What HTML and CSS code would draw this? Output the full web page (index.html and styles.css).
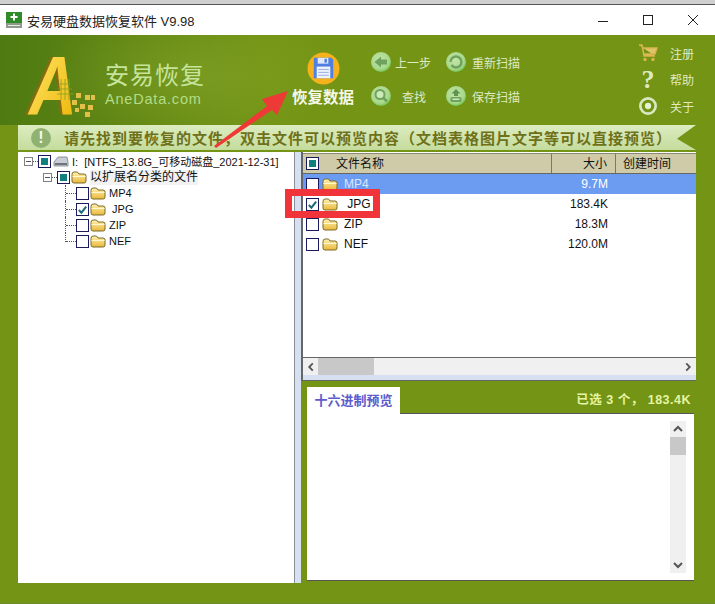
FILE: index.html
```html
<!doctype html>
<html>

<head>
	<meta charset="utf-8" />
	<title>安易硬盘数据恢复软件</title>
	<link rel="stylesheet" href="styles.css">
</head>

<body>

	<svg class="defs" width="0" height="0">
		<defs>
			<linearGradient id="folderFill" x1="0" y1="0" x2="0" y2="1">
				<stop offset="0" stop-color="#fff2b0" />
				<stop offset="1" stop-color="#e8b93c" />
			</linearGradient>
			<linearGradient id="letterFill" x1="0" y1="0" x2="1" y2="1">
				<stop offset="0" stop-color="#ffec70" />
				<stop offset="1" stop-color="#eeb000" />
			</linearGradient>
			<radialGradient id="ballFill" cx="0.45" cy="0.4" r="0.65">
				<stop offset="0" stop-color="#c4e4aa" />
				<stop offset=".7" stop-color="#a8d88c" />
				<stop offset="1" stop-color="#64c046" />
			</radialGradient>
			<symbol id="folder" viewBox="0 0 16 13">
				<path d="M1 3.500 Q1 1 3 1 H6.500 L8 3 H13 Q15 3 15 5 V10 Q15 12 13 12 H3 Q1 12 1 10 Z" fill="url(#folderFill)" stroke="#7d6a2a" />
				<path d="M1.500 5.500 H14.500" stroke="#fff8d0" />
			</symbol>
			<symbol id="check" viewBox="0 0 12 12">
				<path d="M2 6.500 L4.800 9.500 L10 2.800" fill="none" stroke="#1d6a78" stroke-width="2.200" />
			</symbol>
		</defs>
	</svg>

	<div class="topstrip"></div>

	<div class="titlebar">
		<svg class="appicon" viewBox="0 0 16 16">
			<rect width="16" height="11" fill="#2f8a2a" />
			<path d="M8 1.500 V8.500 M4.500 5 H11.500" stroke="#fff" stroke-width="2" />
			<rect y="11" width="16" height="5" fill="#8f9a8a" />
			<rect x="2" y="13" width="12" height="1" fill="#e8e8e8" />
		</svg>
		<span class="apptitle">安易硬盘数据恢复软件 V9.98</span>
		<div class="winctl">
			<svg viewBox="0 0 10 10"><path d="M0 6.500 H10" stroke="#222" /></svg>
			<svg viewBox="0 0 10 10"><rect x=".5" y=".5" width="9" height="9" fill="none" stroke="#222" /></svg>
			<svg viewBox="0 0 10 10"><path d="M0 0 L10 10 M10 0 L0 10" stroke="#222" /></svg>
		</div>
	</div>

	<header class="toolbar">
		<div class="logo">
			<svg class="logomark" viewBox="0 0 76 66">
				<text class="logoletter" transform="translate(5 61) scale(.85 1.08)">A</text>
				<path d="M33 40 H50 M34 35 H48 M36 30 H46 M37 25 V46 M41 25 V46 M45 25 V46" stroke="#8ca020" stroke-width=".8" fill="none" />
				<g fill="#e2bf48">
					<rect x="52" y="39" width="5" height="5" />
					<rect x="61" y="41" width="5" height="5" />
					<rect x="67" y="41" width="4" height="5" />
					<rect x="48" y="46" width="5" height="5" />
					<rect x="56" y="50" width="5" height="5" />
					<rect x="64" y="51" width="5" height="5" />
					<rect x="51" y="54" width="4" height="4" />
					<rect x="61" y="58" width="5" height="5" />
				</g>
			</svg>
			<div class="logotext">
				<div class="logocn">安易恢复</div>
				<div class="logoen">AneData.com</div>
			</div>
		</div>

		<div class="restore">
			<svg class="restoreicon" viewBox="0 0 34 34">
				<circle cx="17" cy="17" r="16.500" fill="#f5b21c" />
				<path d="M7 6 H25 L27 8 V27 H7 Z" fill="#4f7fe0" />
				<rect x="11" y="6" width="11" height="6" fill="#dfe8fa" />
				<rect x="18" y="7" width="2.500" height="4" fill="#4f7fe0" />
				<rect x="10" y="15" width="14" height="12" fill="#eef2fb" />
				<path d="M11.500 18 H22.500 M11.500 21 H22.500 M11.500 24 H22.500" stroke="#9ab0dc" />
			</svg>
			<span class="restorelabel">恢复数据</span>
		</div>

		<div class="actions">
			<div class="action">
				<svg class="ballicon" viewBox="0 0 20 20">
					<circle cx="10" cy="10" r="10" fill="url(#ballFill)" />
					<path d="M3.500 10 L10 4.500 V7.500 H16 V12.500 H10 V15.500 Z" fill="#6fa25c" />
				</svg>
				<span>上一步</span>
			</div>
			<div class="action">
				<svg class="ballicon" viewBox="0 0 20 20">
					<circle cx="10" cy="10" r="10" fill="url(#ballFill)" />
					<path d="M4.500 10 A5.500 5.500 0 1 1 10 15.500 A5.500 5.500 0 0 1 5.500 13" fill="none" stroke="#6fa25c" stroke-width="2.400" />
				</svg>
				<span>重新扫描</span>
			</div>
			<div class="action">
				<svg class="ballicon" viewBox="0 0 20 20">
					<circle cx="10" cy="10" r="10" fill="url(#ballFill)" />
					<circle cx="9" cy="8.500" r="4.500" fill="#cdeaba" stroke="#6fa25c" stroke-width="2" />
					<path d="M12.500 12 L16 15.500" stroke="#6fa25c" stroke-width="2.600" />
				</svg>
				<span class="wide">查找</span>
			</div>
			<div class="action">
				<svg class="ballicon" viewBox="0 0 20 20">
					<circle cx="10" cy="10" r="10" fill="url(#ballFill)" />
					<path d="M10 3 L14.500 7.500 H12 V10 H8 V7.500 H5.500 Z" fill="#5f9450" />
					<rect x="4.500" y="11" width="11" height="5" rx="1.500" fill="#6fa25c" />
					<rect x="6.500" y="12.500" width="7" height="1.500" fill="#cdeaba" />
				</svg>
				<span>保存扫描</span>
			</div>
		</div>

		<div class="helpmenu">
			<div class="helpitem">
				<svg class="helpicon" viewBox="0 0 20 18">
					<path d="M1 1 H4 L6 12 H17 M5 4 H19 L17 10 H6" fill="#e2c468" stroke="#d8b450" stroke-width="1.500" />
					<circle cx="7" cy="15.500" r="1.700" fill="#d8b450" />
					<circle cx="15" cy="15.500" r="1.700" fill="#d8b450" />
				</svg>
				<span>注册</span>
			</div>
			<div class="helpitem">
				<span class="helpmark">?</span>
				<span>帮助</span>
			</div>
			<div class="helpitem">
				<svg class="helpicon" viewBox="0 0 20 20">
					<circle cx="10" cy="10" r="8.500" fill="none" stroke="#d8e8c0" stroke-width="3" />
					<circle cx="10" cy="10" r="3.500" fill="#e6f0d2" />
				</svg>
				<span>关于</span>
			</div>
		</div>
	</header>

	<div class="banner">
		<span class="bangicon">!</span>
		<span class="bannertext">请先找到要恢复的文件，双击文件可以预览内容（文档表格图片文字等可以直接预览）</span>
	</div>

	<main class="workspace">

		<section class="tree">
			<div class="treerow">
				<span class="expander"></span>
				<span class="dots"></span>
				<span class="cb mixed"></span>
				<svg class="driveicon" viewBox="0 0 16 11">
					<path d="M1 6 L5 1 H14 L15 6 V10 H1 Z" fill="#c8ccd4" stroke="#7a8088" stroke-width=".8" />
					<rect x="2" y="7" width="12" height="2" fill="#6e747c" />
				</svg>
				<span class="rootlabel">I:&nbsp; [NTFS_13.8G_可移动磁盘_2021-12-31]</span>
			</div>
			<div class="treerow level1">
				<span class="expander"></span>
				<span class="dots"></span>
				<span class="cb mixed"></span>
				<svg class="foldericon"><use href="#folder" /></svg>
				<span class="grouplabel">以扩展名分类的文件</span>
			</div>
			<div class="treerow level2">
				<span class="stub"></span>
				<span class="cb"></span>
				<svg class="foldericon"><use href="#folder" /></svg>
				<span class="leaf">MP4</span>
			</div>
			<div class="treerow level2">
				<span class="stub"></span>
				<span class="cb"><svg class="tick"><use href="#check" /></svg></span>
				<svg class="foldericon"><use href="#folder" /></svg>
				<span class="leaf">&nbsp;JPG</span>
			</div>
			<div class="treerow level2">
				<span class="stub"></span>
				<span class="cb"></span>
				<svg class="foldericon"><use href="#folder" /></svg>
				<span class="leaf">ZIP</span>
			</div>
			<div class="treerow level2">
				<span class="stub last"></span>
				<span class="cb"></span>
				<svg class="foldericon"><use href="#folder" /></svg>
				<span class="leaf">NEF</span>
			</div>
		</section>

		<div class="vsplit"></div>

		<section class="rightside">
			<div class="filelist">
				<div class="listhead">
					<div class="col-name"><span class="cb mixed"></span><span class="headname">文件名称</span></div>
					<div class="col-size">大小</div>
					<div class="col-date">创建时间</div>
				</div>
				<div class="listbody">
					<div class="filerow selected">
						<span class="cb"></span>
						<svg class="foldericon"><use href="#folder" /></svg>
						<span class="fname">MP4</span>
						<span class="fsize">9.7M</span>
					</div>
					<div class="filerow">
						<span class="cb"><svg class="tick"><use href="#check" /></svg></span>
						<svg class="foldericon"><use href="#folder" /></svg>
						<span class="fname">&nbsp;JPG</span>
						<span class="fsize">183.4K</span>
					</div>
					<div class="filerow">
						<span class="cb"></span>
						<svg class="foldericon"><use href="#folder" /></svg>
						<span class="fname">ZIP</span>
						<span class="fsize">18.3M</span>
					</div>
					<div class="filerow">
						<span class="cb"></span>
						<svg class="foldericon"><use href="#folder" /></svg>
						<span class="fname">NEF</span>
						<span class="fsize">120.0M</span>
					</div>
				</div>
				<div class="hscroll">
					<svg class="arrow" viewBox="0 0 16 18"><path d="M10 5 L6 9 L10 13" fill="none" stroke="#555" stroke-width="2" /></svg>
					<div class="hthumb"></div>
					<svg class="arrow" viewBox="0 0 16 18"><path d="M6 5 L10 9 L6 13" fill="none" stroke="#555" stroke-width="2" /></svg>
				</div>
			</div>

			<div class="hsplit"></div>

			<div class="previewhead">
				<div class="tab">十六进制预览</div>
				<div class="selinfo">已选 3 个， 183.4K</div>
			</div>

			<div class="preview">
				<div class="vscroll">
					<svg class="arrow up" viewBox="0 0 16 16"><path d="M4 10 L8 6 L12 10" fill="none" stroke="#555" stroke-width="2" /></svg>
					<div class="vthumb"></div>
					<svg class="arrow down" viewBox="0 0 16 16"><path d="M4 6 L8 10 L12 6" fill="none" stroke="#555" stroke-width="2" /></svg>
				</div>
			</div>
		</section>

	</main>

	<!-- annotations lying over the app -->
	<svg class="pointer" viewBox="0 0 80 64">
		<path d="M2 61 L55 21 L50 14 L76 6 L65 30 L60 25 L4 63 Z" fill="#ee3a36" />
	</svg>
	<div class="redbox"></div>

</body>

</html>
```

FILE: styles.css
```css
* {
	box-sizing: border-box;
}

html,
body {
	margin: 0;
	padding: 0;
}

body {
	position: relative;
	width: 715px;
	height: 604px;
	overflow: hidden;
	background: #739414;
	border-bottom: 1px solid #6d8a28;
	font-family: "Liberation Sans", "Noto Sans CJK SC", sans-serif;
	font-size: 12px;
	color: #111;
}

.defs {
	position: absolute;
}

.topstrip {
	height: 5px;
	background: #cfcfcf;
	border-bottom: 1px solid #555;
}

/* title bar */
.titlebar {
	display: flex;
	align-items: center;
	height: 30px;
	padding: 0 17px 0 6px;
	background: #fff;
}

.appicon {
	width: 16px;
	height: 16px;
	margin-right: 5px;
}

.apptitle {
	font-size: 13px;
	color: #222;
}

.winctl {
	display: flex;
	gap: 35px;
	margin-left: auto;
}

.winctl svg {
	width: 10px;
	height: 10px;
}

/* green toolbar */
.toolbar {
	display: flex;
	height: 90px;
	background:
		radial-gradient(ellipse 150px 70px at 190px 40px, rgba(150, 180, 60, .35), rgba(150, 180, 60, 0)),
		linear-gradient(90deg, #4d7a12 0, #5f8512 120px, #739414 270px);
}

.logo {
	display: flex;
	width: 292px;
	padding: 19px 0 0 24px;
}

.logomark {
	flex: none;
	width: 76px;
	height: 66px;
	overflow: visible;
}

.logoletter {
	font-family: "Liberation Sans", sans-serif;
	font-weight: bold;
	font-style: italic;
	font-size: 78px;
	fill: url(#letterFill);
	filter: drop-shadow(-3px 0 0 #8a6a10);
}

.logotext {
	margin-left: 5px;
	padding-top: 7px;
}

.logocn {
	font-size: 24px;
	line-height: 30px;
	letter-spacing: 1px;
	color: #c6e49c;
}

.logoen {
	font-size: 14.500px;
	line-height: 17px;
	letter-spacing: .8px;
	color: #b4dc88;
}

.restore {
	display: flex;
	flex-direction: column;
	align-items: center;
	width: 62px;
	padding-top: 17px;
}

.restoreicon {
	width: 33px;
	height: 33px;
}

.restorelabel {
	margin-top: 1px;
	font-size: 15.500px;
	line-height: 24px;
	font-weight: bold;
	color: #f6f8e8;
	white-space: nowrap;
}

.actions {
	display: grid;
	grid-template-columns: 75px 75px;
	grid-auto-rows: 34px;
	padding: 10px 0 0 17px;
}

.action {
	display: flex;
	align-items: center;
	gap: 4px;
	color: #dfeac4;
}

.ballicon {
	flex: none;
	width: 20px;
	height: 20px;
}

.action .wide {
	margin-left: 7px;
}

.action:nth-child(even) {
	gap: 6px;
}

.helpmenu {
	display: flex;
	flex-direction: column;
	margin-left: 118px;
	padding-top: 5px;
}

.helpitem {
	display: flex;
	align-items: center;
	height: 26.500px;
	color: #dfeac4;
}

.helpitem > :first-child {
	flex: none;
	width: 20px;
	margin-right: 12px;
	margin-left: -1px;
}

.helpicon {
	height: 18px;
}

.helpmark {
	font-family: "Liberation Serif", serif;
	font-size: 26px;
	font-weight: bold;
	line-height: 26px;
	text-align: center;
	color: #dfeac4;
}

/* hint banner */
.banner {
	display: flex;
	align-items: center;
	height: 25px;
	margin-left: 18px;
	width: 678px;
	padding-left: 13px;
	background: linear-gradient(180deg, #dcecc0, #c4dc9c);
	clip-path: polygon(0 0, 100% 0, 659px 55%, 100% 100%, 0 100%);
}

.bangicon {
	flex: none;
	width: 20px;
	height: 20px;
	border-radius: 50%;
	background: #8fb272;
	color: #f4f8ea;
	font-weight: bold;
	font-size: 16px;
	line-height: 20px;
	text-align: center;
}

.bannertext {
	margin-left: 13px;
	font-size: 15px;
	font-weight: bold;
	letter-spacing: 1px;
	color: #6f711a;
	white-space: nowrap;
}

/* main area */
.workspace {
	display: flex;
	height: 431px;
	margin: 2px 0 0 18px;
}

.tree {
	width: 276px;
	padding: 1px 0 0 6px;
	background: #fff;
}

.treerow {
	display: flex;
	align-items: center;
	height: 16px;
}

.level1 {
	padding-left: 19px;
}

.level2 {
	padding-left: 41px;
}

.expander {
	flex: none;
	width: 9px;
	height: 9px;
	background: linear-gradient(#555, #555) center / 5px 1px no-repeat, #fff;
	border: 1px solid #808080;
}

.dots {
	flex: none;
	width: 5px;
	border-bottom: 1px dotted #555;
}

.cb {
	display: inline-block;
	flex: none;
	width: 13px;
	height: 13px;
	background: #fff;
	border: 1px solid #1a1a5c;
}

.cb.mixed {
	background: linear-gradient(#0f7f80, #0f7f80) center / 7px 7px no-repeat, #fff;
}

.tick {
	display: block;
	width: 11px;
	height: 11px;
}

.driveicon {
	flex: none;
	width: 16px;
	height: 11px;
	margin: 0 3px 0 2px;
}

.foldericon {
	flex: none;
	width: 16px;
	height: 13px;
	margin-left: 1px;
}

.rootlabel {
	font-size: 11px;
	white-space: nowrap;
}

.grouplabel {
	margin-left: 3px;
	background: #f2f2f2;
	line-height: 15px;
}

.stub {
	position: relative;
	flex: none;
	width: 11px;
	height: 16px;
	border-left: 1px dotted #555;
}

.stub::after {
	content: "";
	position: absolute;
	top: 8px;
	left: 0;
	width: 10px;
	border-top: 1px dotted #555;
}

.stub.last {
	height: 9px;
	align-self: flex-start;
}

.leaf {
	margin-left: 3px;
	font-size: 11px;
}

.vsplit {
	width: 7px;
	background: #d6e0f0;
	border-left: 1px solid #8a9098;
}

.rightside {
	display: flex;
	flex-direction: column;
	width: 395px;
}

/* file list */
.filelist {
	display: flex;
	flex-direction: column;
	height: 223px;
	background: #fff;
	border-left: 2px solid #666;
}

.listhead {
	display: flex;
	height: 21px;
	margin-top: 1px;
	background: #cfcaa8;
	border-bottom: 1px solid #666;
	border-top: 1px solid #8a8a70;
	line-height: 21px;
}

.col-name {
	display: flex;
	align-items: center;
	width: 249px;
	padding-left: 3px;
	border-right: 1px solid #777;
}

.headname {
	margin: 2px 0 0 17px;
}

.col-size {
	width: 64px;
	padding-right: 8px;
	text-align: right;
	border-right: 1px solid #777;
}

.col-date {
	padding-left: 7px;
}

.listbody {
	flex: 1;
}

.filerow {
	display: flex;
	align-items: center;
	height: 20px;
	padding-left: 3px;
}

.filerow .foldericon {
	margin-left: 3px;
}

.filerow.selected {
	background: #6c9cf2;
	color: #fff;
}

.filerow.selected .fname {
	color: #dbe6ff;
}

.fname {
	width: 42px;
	margin-left: 6px;
}

.fsize {
	width: 222px;
	text-align: right;
}

.hscroll {
	display: flex;
	align-items: center;
	height: 18px;
	background: #f0f0f0;
	border-top: 1px solid #666;
}

.arrow {
	flex: none;
	width: 16px;
	height: 16px;
}

.hscroll .arrow:last-child {
	margin-left: auto;
}

.hthumb {
	width: 56px;
	height: 17px;
	margin-left: -1px;
	background: #c8c8c8;
}

.hsplit {
	height: 6px;
	background: #d6e0f0;
	border-bottom: 1px solid #666;
	border-left: 2px solid #666;
}

.previewhead {
	display: flex;
	justify-content: space-between;
	height: 32px;
	padding: 6px 5px 0 6px;
}

.tab {
	position: relative;
	z-index: 1;
	width: 93px;
	height: 27px;
	background: #fff;
	font-size: 13px;
	font-weight: bold;
	line-height: 27px;
	text-align: center;
	color: #5c5ccc;
}

.selinfo {
	padding-top: 2px;
	font-size: 12.500px;
	font-weight: bold;
	letter-spacing: .5px;
	color: #e6f4a4;
}

.preview {
	display: flex;
	justify-content: flex-end;
	width: 387px;
	height: 168px;
	margin-left: 6px;
	padding: 7px 8px 7px 0;
	background: #fff;
	border-top: 1px solid #555;
	border-bottom: 1px solid #555;
}

.vscroll {
	display: flex;
	flex-direction: column;
	width: 16px;
	background: #f0f0f0;
}

.vthumb {
	height: 18px;
	background: #c8c8c8;
}

.arrow.down {
	margin-top: auto;
}

/* annotations */
.pointer {
	position: absolute;
	top: 85px;
	left: 212px;
	width: 80px;
	height: 64px;
}

.redbox {
	position: absolute;
	top: 189px;
	left: 285px;
	width: 95px;
	height: 29px;
	border: 7px solid #f0343a;
}
```
